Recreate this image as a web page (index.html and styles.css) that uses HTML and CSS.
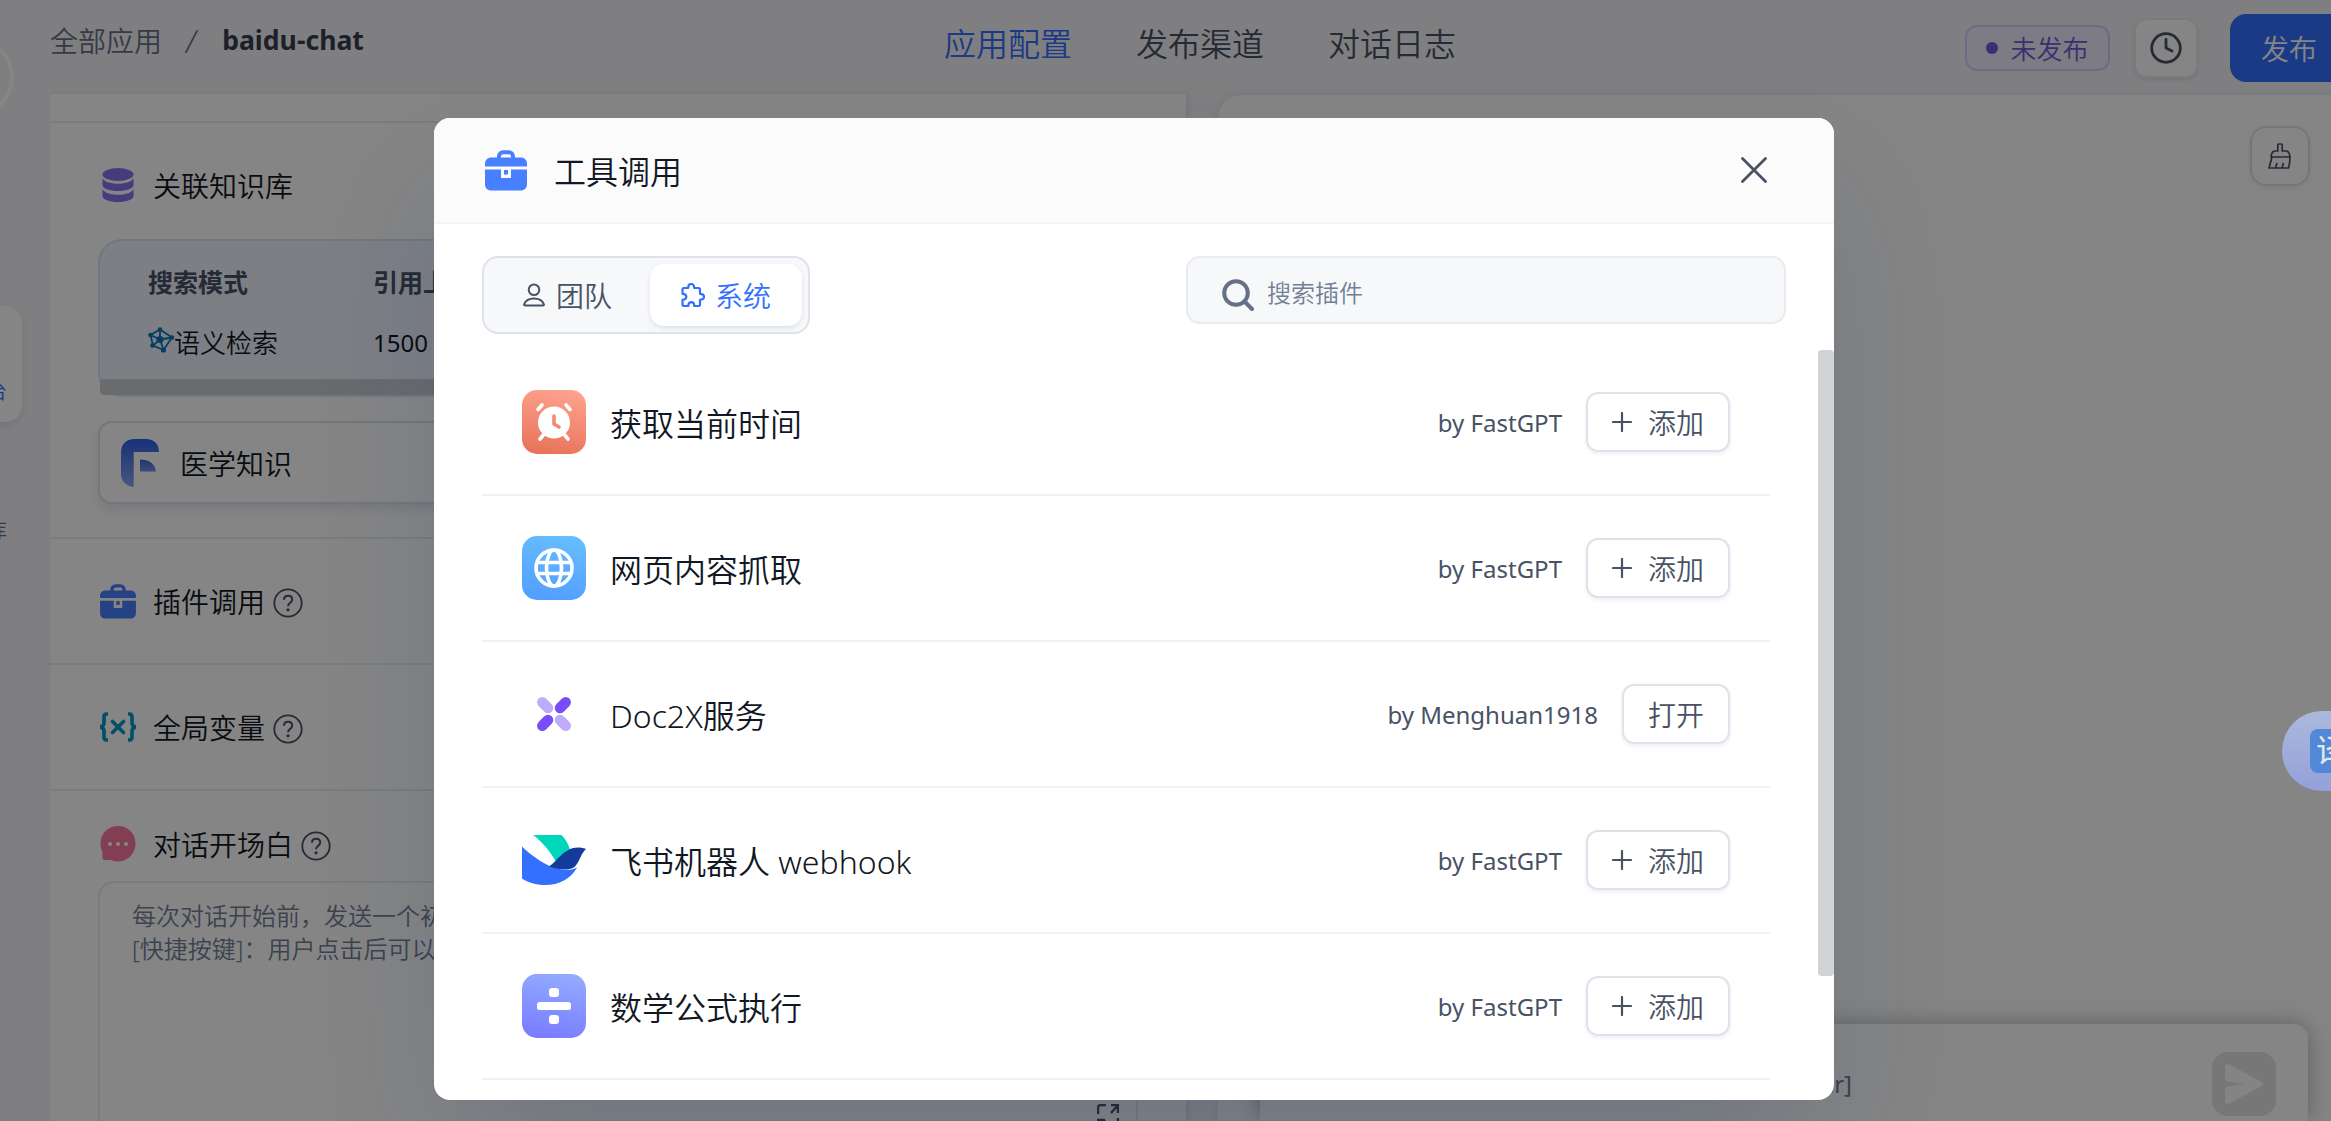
FILE: index.html
```html
<!DOCTYPE html>
<html lang="zh-CN">

<head>
    <meta charset="UTF-8">
    <meta name="viewport" content="width=device-width, initial-scale=1.0">
    <title>baidu-chat</title>
    <link rel="stylesheet" href="styles.css">
</head>

<body>
    <!-- shared icons -->
    <svg class="sprite" aria-hidden="true">
        <symbol id="toolbox" viewBox="0 0 42 41">
            <path d="M14 9V6.5C14 4 15.800 2.200 18.200 2.200h5.600C26.200 2.200 28 4 28 6.500V9" fill="none" stroke="currentColor" stroke-width="4" />
            <path d="M0 16.500V14c0-4 2.500-6.500 6.500-6.500h29C39.500 7.500 42 10 42 14v2.500z" fill="currentColor" />
            <path d="M0 19.500h16V28h10v-8.500h16V34c0 4.200-2.400 6.500-6.500 6.500h-29C2.400 40.500 0 38.200 0 34z" fill="currentColor" />
            <path d="M19 20h4v4.500h-4z" fill="currentColor" />
        </symbol>
        <symbol id="help" viewBox="0 0 30 30">
            <circle cx="15" cy="15" r="13.700" fill="none" stroke="currentColor" stroke-width="1.800" />
            <path d="M11 11.800c0-2.400 1.800-4 4.200-4s4 1.500 4 3.700c0 3.200-4.200 3.300-4.200 6.800" fill="none" stroke="currentColor" stroke-width="2" />
            <circle cx="15" cy="21.800" r="1.600" fill="currentColor" />
        </symbol>
        <symbol id="plus" viewBox="0 0 20 20">
            <path d="M10 1v18M1 10h18" fill="none" stroke="currentColor" stroke-width="2.200" stroke-linecap="round" />
        </symbol>
    </svg>

    <div class="page">
        <aside class="sidebar">
            <div class="avatar"></div>
            <div class="side-item active"><span>工作台</span></div>
            <div class="side-item"><span>知识库</span></div>
        </aside>

        <div class="main">
            <header class="topbar">
                <div class="breadcrumb">
                    <span>全部应用</span>
                    <span class="slash">/</span>
                    <b>baidu-chat</b>
                </div>
                <nav class="top-tabs">
                    <a class="active">应用配置</a>
                    <a>发布渠道</a>
                    <a>对话日志</a>
                </nav>
                <div class="actions">
                    <span class="status"><i></i>未发布</span>
                    <span class="history-btn">
                        <svg width="32" height="32" viewBox="0 0 32 32" fill="none" stroke="currentColor" stroke-width="2.800" stroke-linecap="round" stroke-linejoin="round">
                            <circle cx="16" cy="16" r="14.300" />
                            <path d="M16 7.500V16l6 3" />
                        </svg>
                    </span>
                    <span class="publish-btn">发布</span>
                </div>
            </header>

            <div class="columns">
                <section class="config">
                    <div class="block block-top"></div>
                    <div class="block block-dataset">
                        <div class="block-title">
                            <span class="block-icon">
                                <svg width="32" height="34" viewBox="0 0 32 34" fill="#8774ee">
                                    <ellipse cx="16" cy="6.500" rx="15.500" ry="6.500" />
                                    <path d="M.5 10.500c3 4 9 5.200 15.500 5.200s12.500-1.200 15.500-5.200V17c0 3.500-7 6-15.500 6S.5 20.500.5 17z" />
                                    <path d="M.5 21.500C3.500 25.500 9.500 26.700 16 26.700s12.500-1.200 15.500-5.200V28c0 3.500-7 6-15.500 6S.5 31.500.5 28z" />
                                </svg>
                            </span>
                            关联知识库
                        </div>
                        <div class="search-params">
                            <div class="param">
                                <b>搜索模式</b>
                                <span>
                                    <svg width="26" height="26" viewBox="0 0 26 26" fill="none" stroke="#0a78b4" stroke-width="1.800">
                                        <path d="M12 2.500L2.500 8 5 18.500 15.500 23 24 10.500zM12 2.500v10M2.500 8l9.500 4.500L5 18.500M12 12.500l3.500 10.500M12 12.500l12-2" />
                                        <g fill="#0a78b4" stroke="none">
                                            <circle cx="12" cy="2.500" r="2.300" />
                                            <circle cx="2.500" cy="8" r="2.300" />
                                            <circle cx="4.500" cy="18.500" r="2.300" />
                                            <circle cx="15.500" cy="23" r="2.600" />
                                            <circle cx="24" cy="10.500" r="2.300" />
                                            <circle cx="12" cy="12.500" r="3.600" />
                                        </g>
                                    </svg>语义检索
                                </span>
                            </div>
                            <div class="param">
                                <b>引用上限</b>
                                <span class="num">1500</span>
                            </div>
                            <div class="h-scroll"></div>
                        </div>
                        <div class="dataset">
                            <svg width="38" height="48" viewBox="0 0 38 48">
                                <defs>
                                    <linearGradient id="fg" x1="0" y1="0" x2="0" y2="1">
                                        <stop offset="0" stop-color="#2d5fe8" />
                                        <stop offset="1" stop-color="#8ba6ee" />
                                    </linearGradient>
                                    <linearGradient id="fg2" x1="0" y1="0" x2="0" y2="1">
                                        <stop offset="0" stop-color="#3c68e0" />
                                        <stop offset="1" stop-color="#7592e6" />
                                    </linearGradient>
                                </defs>
                                <path d="M14 0h11c8 0 13 5 13 13H12.700v35C5 47 0 42 0 35V14C0 5 5 0 14 0z" fill="url(#fg)" />
                                <path d="M19 20.500c9 0 15 4 16 12H19z" fill="url(#fg2)" />
                            </svg>
                            医学知识
                        </div>
                    </div>
                    <div class="block block-row">
                        <div class="block-title">
                            <span class="block-icon blue"><svg width="36" height="35"><use href="#toolbox" /></svg></span>
                            插件调用
                            <svg class="help" width="30" height="30"><use href="#help" /></svg>
                        </div>
                    </div>
                    <div class="block block-row">
                        <div class="block-title">
                            <span class="block-icon">
                                <svg width="36" height="30" viewBox="0 0 36 30" fill="none" stroke="#0397c8" stroke-width="3.600">
                                    <path d="M8 2H6.500Q4 2 4 5v6q0 3-3.500 4Q4 16 4 19v6q0 3 2.500 3H8M28 2h1.500Q32 2 32 5v6q0 3 3.500 4Q32 16 32 19v6q0 3-2.500 3H28" />
                                    <path d="M12.500 9.500l11 11M23.500 9.500l-11 11" stroke-linecap="round" />
                                </svg>
                            </span>
                            全局变量
                            <svg class="help" width="30" height="30"><use href="#help" /></svg>
                        </div>
                    </div>
                    <div class="block block-welcome">
                        <div class="block-title">
                            <span class="block-icon">
                                <svg width="36" height="36" viewBox="0 0 36 36">
                                    <path d="M18 0C8 0 .5 7.500.5 17.500c0 3.500.8 6 1.800 8V31c0 2 .7 3 2.700 3h6c2.300 1 4.600 1.500 7 1.500 10 0 17.500-8 17.500-18S28 0 18 0z" fill="#fa7a9f" />
                                    <g fill="#fff">
                                        <circle cx="10" cy="18" r="2" />
                                        <circle cx="18" cy="18" r="2" />
                                        <circle cx="26" cy="18" r="2" />
                                    </g>
                                </svg>
                            </span>
                            对话开场白
                            <svg class="help" width="30" height="30"><use href="#help" /></svg>
                        </div>
                        <div class="welcome-input">
                            <p>每次对话开始前，发送一个初始内容。支持标准 Markdown 语法。可使用的额外标记：</p>
                            <p>[快捷按键]：用户点击后可以直接发送该问题</p>
                            <svg class="expand" width="22" height="24" viewBox="0 0 22 24" fill="none" stroke="#485264" stroke-width="2.400">
                                <path d="M1 10V4q0-3 3-3h5M14 1h7v8M21 1l-7 8M1 23v-7h7M8 16l-7 7M21 14v9" />
                            </svg>
                        </div>
                    </div>
                </section>

                <section class="chat">
                    <div class="clear-btn">
                        <svg width="24" height="27" viewBox="0 0 24 27" fill="none" stroke="currentColor" stroke-width="1.700" stroke-linejoin="round">
                            <path d="M9.800 8V2q0-1 1-1h2.400q1 0 1 1v6h4.500q2.800 1 3.300 6h-19q.5-5 3.300-6zM4 14L1 25h19.500q1.500-5 1.500-11M7.500 25l1.500-5M14 25l1.500-5" />
                        </svg>
                    </div>
                    <div class="chat-input">
                        <span class="hint">输入问题，发送 [Enter]/换行 [Ctrl(Alt/Shift) + Enter]</span>
                        <span class="send-btn">
                            <svg width="38" height="40" viewBox="0 0 38 40" fill="#fdfdfd">
                                <path d="M4 .5l32 17q3.500 2.500 0 5l-32 17q-4 1-4-3V26q0-3 3-3.500L20 20 3 17.500Q0 17 0 14V3.500Q0-.5 4 .5z" />
                            </svg>
                        </span>
                    </div>
                </section>
            </div>
        </div>
    </div>

    <div class="overlay"></div>

    <div class="modal">
        <div class="modal-header">
            <svg class="modal-icon" width="42" height="41"><use href="#toolbox" /></svg>
            <span>工具调用</span>
            <svg class="close" width="26" height="26" viewBox="0 0 26 26" fill="none" stroke="currentColor" stroke-width="2.800" stroke-linecap="round">
                <path d="M1.500 1.500l23 23M24.500 1.500l-23 23" />
            </svg>
        </div>

        <div class="toolbar">
            <div class="tabs">
                <div class="tab">
                    <svg width="22" height="24" viewBox="0 0 22 24" fill="none" stroke="currentColor" stroke-width="2">
                        <circle cx="11" cy="6.800" r="5.300" />
                        <path d="M2.200 22.500q-1.400 0-1-1.400Q3.500 15.500 11 15.500t9.800 5.600q.4 1.400-1 1.400z" />
                    </svg>
                    团队
                </div>
                <div class="tab active">
                    <svg width="24" height="24" viewBox="0 0 24 24" fill="none" stroke="currentColor" stroke-width="2.200" stroke-linejoin="round">
                        <path d="M3 5h4.200c0-2.500 1-4 3-4s3 1.500 3 4h4.300q1.500 0 1.500 1.500v4.300c2.600 0 4 1 4 3s-1.400 3-4 3v4.700q0 1.500-1.500 1.500h-4.200c0-2.600-1-3.800-3-3.800s-3 1.200-3 3.800H3q-1.500 0-1.500-1.500v-4.700c2.600 0 3.800-1 3.800-3s-1.200-3-3.800-3V6.500Q1.500 5 3 5z" />
                    </svg>
                    系统
                </div>
            </div>
            <div class="search">
                <svg width="32" height="32" viewBox="0 0 32 32" fill="none" stroke="#667085" stroke-width="4">
                    <circle cx="14" cy="14" r="11.800" />
                    <path d="M22.500 22.500l7.500 7.500" stroke-linecap="round" />
                </svg>
                <span>搜索插件</span>
            </div>
        </div>

        <div class="list-wrap">
            <div class="list">
                <div class="item">
                    <svg class="logo" width="64" height="64" viewBox="0 0 64 64">
                        <defs>
                            <linearGradient id="g1" x1=".6" y1="0" x2=".4" y2="1">
                                <stop offset="0" stop-color="#fea18d" />
                                <stop offset="1" stop-color="#e8745a" />
                            </linearGradient>
                        </defs>
                        <rect width="64" height="64" rx="15" fill="url(#g1)" />
                        <circle cx="32" cy="32.500" r="16" fill="#fff" />
                        <path d="M16 19.500l4-4.500M48 19.500L44 15M18 49l5-6M46 49l-5-6" stroke="#fff" stroke-width="3.600" stroke-linecap="round" />
                        <path d="M32 26v8l5 3" fill="none" stroke="#f48a74" stroke-width="3.600" stroke-linecap="round" stroke-linejoin="round" />
                    </svg>
                    <span class="name">获取当前时间</span>
                    <span class="author">by FastGPT</span>
                    <span class="btn"><svg width="20" height="20"><use href="#plus" /></svg>添加</span>
                </div>
                <div class="item">
                    <svg class="logo" width="64" height="64" viewBox="0 0 64 64">
                        <defs>
                            <linearGradient id="g2" x1=".6" y1="0" x2=".4" y2="1">
                                <stop offset="0" stop-color="#66bdff" />
                                <stop offset="1" stop-color="#529fff" />
                            </linearGradient>
                        </defs>
                        <rect width="64" height="64" rx="15" fill="url(#g2)" />
                        <g fill="none" stroke="#fff" stroke-width="3.600">
                            <circle cx="32" cy="32" r="18" />
                            <ellipse cx="32" cy="32" rx="7.500" ry="18" />
                            <path d="M15 26.500h34M15 37.500h34" />
                        </g>
                    </svg>
                    <span class="name">网页内容抓取</span>
                    <span class="author">by FastGPT</span>
                    <span class="btn"><svg width="20" height="20"><use href="#plus" /></svg>添加</span>
                </div>
                <div class="item">
                    <svg class="logo" width="64" height="64" viewBox="0 0 64 64" fill="none" stroke-width="10.500" stroke-linecap="round">
                        <path d="M20.300 20.300l5.700 5.700M43.700 43.700L38 38" stroke="#bfaafc" />
                        <path d="M43.700 20.300L38 26M20.300 43.700L26 38" stroke="#7a4bfa" />
                    </svg>
                    <span class="name">Doc2X服务</span>
                    <span class="author">by Menghuan1918</span>
                    <span class="btn">打开</span>
                </div>
                <div class="item">
                    <svg class="logo" width="64" height="64" viewBox="0 0 64 64">
                        <path d="M11 7h28.500c4 4 7 9 8.500 15L33.500 33C28 23 20 13.500 11 7z" fill="#00d6b9" />
                        <path d="M0 18.500C9 28 19 34.500 31 39c10 3 18 4 24 0C49 50 37 49 23 49z" fill="none" />
                        <path d="M0 18.500C8 27 18 34.500 31 39.500c10 3 18 4 24 0C49 43 37 49 23 49" fill="none" />
                        <path d="M0 18.500C9 28 19 35 31 40c10 3 18 4 24 0C49 51 37 49 23 49" fill="none" />
                        <path d="M0 18.500C9 27 19 34.500 31 39.500c10 3 18 3.500 24 0C49 51 37 57 23 57 14 57 6 54.500 0 50.500z" fill="#3370ff" />
                        <path d="M27 38.500c8-5 15-19 29-19 3 0 5.500.5 8 1.500-5 4-6 12-11 17.500-6 5-17 3-26 0z" fill="#133c9a" />
                    </svg>
                    <span class="name">飞书机器人 webhook</span>
                    <span class="author">by FastGPT</span>
                    <span class="btn"><svg width="20" height="20"><use href="#plus" /></svg>添加</span>
                </div>
                <div class="item">
                    <svg class="logo" width="64" height="64" viewBox="0 0 64 64">
                        <defs>
                            <linearGradient id="g3" x1=".6" y1="0" x2=".4" y2="1">
                                <stop offset="0" stop-color="#93aaff" />
                                <stop offset="1" stop-color="#7a7dff" />
                            </linearGradient>
                        </defs>
                        <rect width="64" height="64" rx="15" fill="url(#g3)" />
                        <g fill="#fff">
                            <rect x="27" y="14" width="10" height="9" rx="3" />
                            <rect x="15" y="28" width="34" height="8" rx="2.500" />
                            <rect x="27" y="41" width="10" height="9" rx="3" />
                        </g>
                    </svg>
                    <span class="name">数学公式执行</span>
                    <span class="author">by FastGPT</span>
                    <span class="btn"><svg width="20" height="20"><use href="#plus" /></svg>添加</span>
                </div>
            </div>
            <div class="v-scroll"></div>
        </div>
    </div>

    <div class="translate"><span>译</span></div>
</body>

</html>
```

FILE: styles.css
```css
* {
    box-sizing: border-box;
}

body {
    margin: 0;
    height: 1121px;
    position: relative;
    overflow: hidden;
    background-color: #f4f4f7;
    color: #111824;
    font-family: "Noto Sans", "Noto Sans CJK SC", sans-serif;
    font-size: 28px;
    font-weight: 350;
    white-space: nowrap;
}

svg {
    display: block;
    flex: none;
}

p {
    margin: 0;
}

.sprite {
    position: absolute;
    width: 0;
    height: 0;
}

.page {
    display: flex;
    height: 1121px;
}

/* sidebar */
.sidebar {
    width: 50px;
    flex: none;
    padding-top: 37px;
    display: flex;
    flex-direction: column;
}

.avatar {
    width: 80px;
    height: 80px;
    margin-left: -66px;
    border: 4px solid #fff;
    border-radius: 50%;
    flex: none;
}

.side-item {
    width: 120px;
    height: 116px;
    margin-left: -98px;
    padding: 0 15px 18px 0;
    display: flex;
    justify-content: flex-end;
    align-items: flex-end;
    font-size: 20px;
    line-height: 24px;
    color: #667085;
}

.side-item.active {
    margin-top: 189px;
    margin-bottom: 23px;
    background-color: #fff;
    border-radius: 16px;
    box-shadow: 0 4px 8px rgba(19, 51, 107, 0.1);
    color: #3370ff;
}

/* top bar */
.main {
    width: 2300px;
    flex: none;
    display: flex;
    flex-direction: column;
}

.topbar {
    height: 94px;
    flex: none;
    display: grid;
    grid-template-columns: 894px 1fr auto;
    align-items: start;
}

.breadcrumb {
    height: 80px;
    display: flex;
    align-items: center;
    color: #667085;
}

.breadcrumb .slash {
    padding: 0 25px 0 24px;
    font-size: 32px;
    transform: skewX(-8deg);
}

.breadcrumb b {
    color: #383f50;
    font-size: 26.600px;
}

.top-tabs {
    height: 84px;
    display: flex;
    align-items: center;
    gap: 64px;
    font-size: 32px;
    color: #485264;
}

.top-tabs .active {
    color: #3370ff;
}

.actions {
    height: 96px;
    display: flex;
    align-items: center;
}

.status {
    width: 145px;
    height: 46px;
    display: flex;
    align-items: center;
    justify-content: center;
    gap: 12px;
    border: 2px solid #d3caff;
    border-radius: 12px;
    background-color: #f0eeff;
    color: #6f5dd7;
    font-size: 26px;
}

.status i {
    width: 12px;
    height: 12px;
    border-radius: 50%;
    background-color: #6f5dd7;
}

.history-btn {
    width: 64px;
    height: 60px;
    margin: 0 32px 0 24px;
    display: flex;
    align-items: center;
    justify-content: center;
    border: 2px solid #e8ebf0;
    border-radius: 12px;
    background-color: #fff;
    box-shadow: 0 2px 4px rgba(19, 51, 107, 0.1);
    color: #485264;
}

.publish-btn {
    width: 120px;
    height: 68px;
    padding-left: 31px;
    border-radius: 16px;
    background-color: #3370ff;
    color: #fff;
    line-height: 70px;
}

/* app config */
.columns {
    display: flex;
    gap: 32px;
    height: 1027px;
}

.config {
    width: 1136px;
    flex: none;
    overflow: hidden;
    background-color: #fff;
    box-shadow: 2px 0 6px rgba(19, 51, 107, 0.1);
}

.block {
    padding: 0 48px;
    border-bottom: 2px solid #e8ebf0;
}

.block-top {
    height: 29px;
}

.block-title {
    display: flex;
    align-items: center;
    height: 40px;
}

.block-icon {
    width: 40px;
    margin-right: 15px;
    display: flex;
    justify-content: center;
}

.block-icon.blue {
    color: #487fff;
}

.help {
    margin-left: 8px;
    color: #485264;
    position: relative;
    top: 2px;
}

.block-dataset {
    height: 416px;
    padding-top: 42px;
}

.search-params {
    height: 158px;
    margin: 34px 0 24px;
    padding: 22px 48px 0;
    position: relative;
    display: flex;
    border: 2px solid #d6e2ff;
    border-radius: 24px;
    background-color: #f0f4ff;
    font-size: 26px;
}

.param {
    width: 225px;
}

.param b {
    display: block;
    height: 38px;
    line-height: 38px;
    color: #485264;
    font-size: 25px;
}

.param span {
    display: flex;
    align-items: center;
    height: 38px;
    margin-top: 22px;
}

.param .num {
    font-size: 24px;
    font-weight: 400;
}

.param svg {
    margin-top: -4px;
}

.h-scroll {
    position: absolute;
    left: 0;
    right: 0;
    bottom: 0;
    height: 16px;
    border-radius: 4px;
    background-color: #cacdd1;
}

.dataset {
    height: 83px;
    padding-left: 21px;
    display: flex;
    align-items: center;
    gap: 21px;
    border: 2px solid #dfe2ea;
    border-radius: 14px;
    box-shadow: 0 6px 10px rgba(19, 51, 107, 0.1);
    background-color: #fff;
}

.block-row {
    height: 126px;
    padding-top: 42px;
}

.block-welcome {
    padding-top: 33px;
    border: none;
}

.welcome-input {
    height: 280px;
    margin-top: 17px;
    padding: 16px 32px;
    position: relative;
    border: 2px solid #e8ebf0;
    border-radius: 16px;
    color: #718096;
    font-size: 24px;
    line-height: 33px;
    overflow: hidden;
}

.expand {
    position: absolute;
    right: 17px;
    top: 221px;
}

/* chat preview */
.chat {
    width: 1132px;
    flex: none;
    position: relative;
    display: flex;
    flex-direction: column;
    justify-content: space-between;
    align-items: flex-start;
    padding-left: 42px;
    border-top: 1px solid #e8ebf0;
    border-radius: 24px 0 0 0;
    background-color: #fff;
    box-shadow: -2px 0 8px rgba(19, 51, 107, 0.06);
}

.clear-btn {
    width: 60px;
    height: 60px;
    margin: 31px 0 0 990px;
    display: flex;
    align-items: center;
    justify-content: center;
    border: 2px solid #dfe2ea;
    border-radius: 16px;
    box-shadow: 0 2px 4px rgba(19, 51, 107, 0.08);
    color: #485264;
}

.chat-input {
    width: 1048px;
    height: 97px;
    padding: 28px 32px 0 0;
    display: flex;
    justify-content: space-between;
    border-radius: 14px 14px 0 0;
    background-color: #fff;
    box-shadow: 0 0 22px rgba(0, 0, 0, 0.3);
}

.hint {
    width: 592px;
    text-align: right;
    font-size: 24px;
    font-weight: 400;
    line-height: 63px;
    color: #718096;
}

.send-btn {
    width: 64px;
    height: 64px;
    padding-left: 13px;
    display: flex;
    align-items: center;
    border-radius: 16px;
    background-color: #e4e4e4;
}

.overlay {
    position: absolute;
    inset: 0;
    background-color: rgba(0, 0, 0, 0.48);
}

/* modal */
.modal {
    position: absolute;
    left: 434px;
    top: 118px;
    width: 1400px;
    height: 982px;
    display: flex;
    flex-direction: column;
    overflow: hidden;
    border-radius: 16px;
    background-color: #fff;
    box-shadow: 0 64px 128px -24px rgba(19, 51, 107, 0.2);
}

.modal-header {
    height: 106px;
    flex: none;
    padding: 0 67px 0 51px;
    display: flex;
    align-items: center;
    gap: 27px;
    border-bottom: 2px solid #f4f4f7;
    background-color: #fbfbfc;
    font-size: 32px;
}

.modal-icon {
    color: #487fff;
}

.close {
    margin-left: auto;
    color: #485264;
}

.toolbar {
    height: 126px;
    flex: none;
    padding: 32px 48px 0;
    display: flex;
    justify-content: space-between;
    align-items: flex-start;
}

.tabs {
    display: flex;
    width: 328px;
    height: 78px;
    padding: 6px;
    border: 2px solid #dfe2ea;
    border-radius: 16px;
    background-color: #f7f8fa;
}

.tab {
    width: 160px;
    padding-right: 5px;
    display: flex;
    align-items: center;
    justify-content: center;
    gap: 11px;
    color: #485264;
}

.tab.active {
    width: 152px;
    padding: 0;
    gap: 10px;
    border-radius: 14px;
    background-color: #fff;
    box-shadow: 0 2px 4px rgba(19, 51, 107, 0.12);
    color: #3370ff;
}

.search {
    width: 600px;
    height: 68px;
    padding-left: 34px;
    display: flex;
    align-items: center;
    gap: 13px;
    border: 2px solid #e8ebf0;
    border-radius: 14px;
    background-color: #f7f8fa;
    color: #718096;
    font-size: 24px;
}

.search svg {
    margin-top: 10px;
}

.search span {
    margin-top: 2px;
}

.list-wrap {
    display: flex;
    justify-content: space-between;
    height: 750px;
    padding-left: 48px;
}

.list {
    width: 1288px;
}

.item {
    height: 146px;
    padding: 0 40px;
    display: flex;
    align-items: center;
    border-bottom: 2px solid #f0f1f6;
}

.name {
    margin: 0 auto 0 24px;
    font-size: 32px;
}

.author {
    margin: 1px 24px 0 0;
    font-size: 24px;
    font-weight: 400;
    color: #485264;
}

.btn {
    height: 60px;
    padding: 0 24px;
    display: flex;
    align-items: center;
    gap: 16px;
    border: 2px solid #dfe2ea;
    border-radius: 12px;
    box-shadow: 0 2px 4px rgba(19, 51, 107, 0.08);
    color: #485264;
}

.v-scroll {
    width: 16px;
    height: 626px;
    border-radius: 4px;
    background-color: #d0d4d7;
}

/* floating translate button */
.translate {
    position: absolute;
    left: 2282px;
    top: 711px;
    width: 90px;
    height: 80px;
    padding: 18px 28px;
    border-radius: 40px 0 0 40px;
    background: linear-gradient(#abb9dc, #93a0da);
}

.translate span {
    display: block;
    width: 44px;
    height: 44px;
    padding-left: 6px;
    border-radius: 8px;
    background-color: #5288d8;
    color: #e4e8ea;
    font-size: 32px;
    font-weight: 400;
    line-height: 42px;
}
```
